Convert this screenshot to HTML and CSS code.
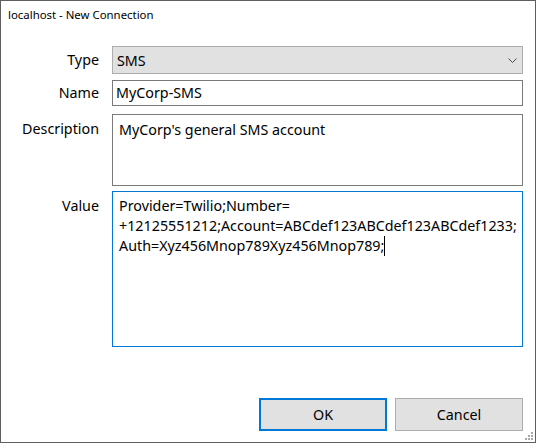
FILE: index.html
```html
<!DOCTYPE html>
<html lang="en">
<head>
    <meta charset="UTF-8">
    <meta name="viewport" content="width=device-width, initial-scale=1.0">
    <title>localhost - New Connection</title>
    <link rel="stylesheet" href="styles.css">
</head>
<body>
    <!-- Dialog window -->
    <div class="window">
        <div class="titlebar">localhost - New Connection</div>

        <div class="form">
            <div class="row row-center">
                <label class="label">Type</label>
                <div class="combo">
                    <span>SMS</span>
                    <svg class="chevron" width="9" height="5" viewBox="0 0 9 5">
                        <path d="M0.5 0.5 L4.5 4.5 L8.5 0.5" fill="none" stroke="#4a4a4a" stroke-width="1"/>
                    </svg>
                </div>
            </div>

            <div class="row row-center gap-name">
                <label class="label">Name</label>
                <div class="field input">MyCorp-SMS</div>
            </div>

            <div class="row gap-desc">
                <label class="label label-area">Description</label>
                <div class="field area desc">MyCorp's general SMS account</div>
            </div>

            <div class="row gap-value">
                <label class="label label-area">Value</label>
                <div class="field area value focused">
                    <div>Provider=Twilio;Number=</div>
                    <div>+12125551212;Account=ABCdef123ABCdef123ABCdef1233;</div>
                    <div>Auth=Xyz456Mnop789Xyz456Mnop789;<span class="caret"></span></div>
                </div>
            </div>
        </div>

        <!-- OK / Cancel -->
        <div class="buttons">
            <button class="btn btn-default">OK</button>
            <button class="btn">Cancel</button>
        </div>

        <!-- size grip in the corner -->
        <svg class="grip" width="10" height="10" viewBox="0 0 10 10">
            <rect x="7" y="1" width="2" height="2" fill="#a8a8a8"/>
            <rect x="4" y="4" width="2" height="2" fill="#a8a8a8"/>
            <rect x="7" y="4" width="2" height="2" fill="#a8a8a8"/>
            <rect x="1" y="7" width="2" height="2" fill="#a8a8a8"/>
            <rect x="4" y="7" width="2" height="2" fill="#a8a8a8"/>
            <rect x="7" y="7" width="2" height="2" fill="#a8a8a8"/>
        </svg>
    </div>
</body>
</html>
```

FILE: styles.css
```css
/* Basic dialog styles */
html, body { margin: 0; padding: 0; background: #fff; }
body { font-family: "Noto Sans", "Open Sans", sans-serif; font-size: 14.3px; color: #000; }

.window { position: relative; width: 536px; height: 443px; box-sizing: border-box; border: 1px solid #5f5f5f; background: #fff; }
.titlebar { height: 31px; box-sizing: border-box; padding: 6px 7px 0; font-size: 11.4px; line-height: 16px; }

.form { padding: 14px 12px 0 8px; }
.row { display: flex; align-items: flex-start; gap: 13px; }
.row-center { align-items: center; }
.gap-name { margin-top: 6px; }
.gap-desc { margin-top: 8px; }
.gap-value { margin-top: 5px; }

.label { width: 90px; flex: none; text-align: right; line-height: 20px; }
.label-area { padding-top: 5px; }

.combo { flex: 1; height: 28px; box-sizing: border-box; border: 1px solid #adadad; background: #e1e1e1; display: flex; align-items: center; justify-content: space-between; padding: 0 5px 0 4px; }
.chevron { display: block; margin-top: 1px; }

.field { flex: 1; min-width: 0; box-sizing: border-box; border: 1px solid #7a7a7a; background: #fff; }
.input { height: 26px; line-height: 22px; padding: 1px 3px; }
.area { padding: 5px 6px; line-height: 20px; white-space: nowrap; overflow: hidden; }
.desc { height: 72px; }
.value { height: 156px; padding-top: 4px; }
.focused { border-color: #0078d7; }
.caret { display: inline-block; width: 1px; height: 20px; background: #000; vertical-align: top; }

.buttons { display: flex; justify-content: flex-end; gap: 8px; margin-top: 51px; padding-right: 12px; }
.btn { width: 128px; height: 33px; box-sizing: border-box; border: 1px solid #adadad; background: #e1e1e1; font: inherit; color: #000; padding: 0; }
.btn-default { border: 2px solid #0078d7; }

.grip { position: absolute; right: 1px; bottom: 1px; }
```
